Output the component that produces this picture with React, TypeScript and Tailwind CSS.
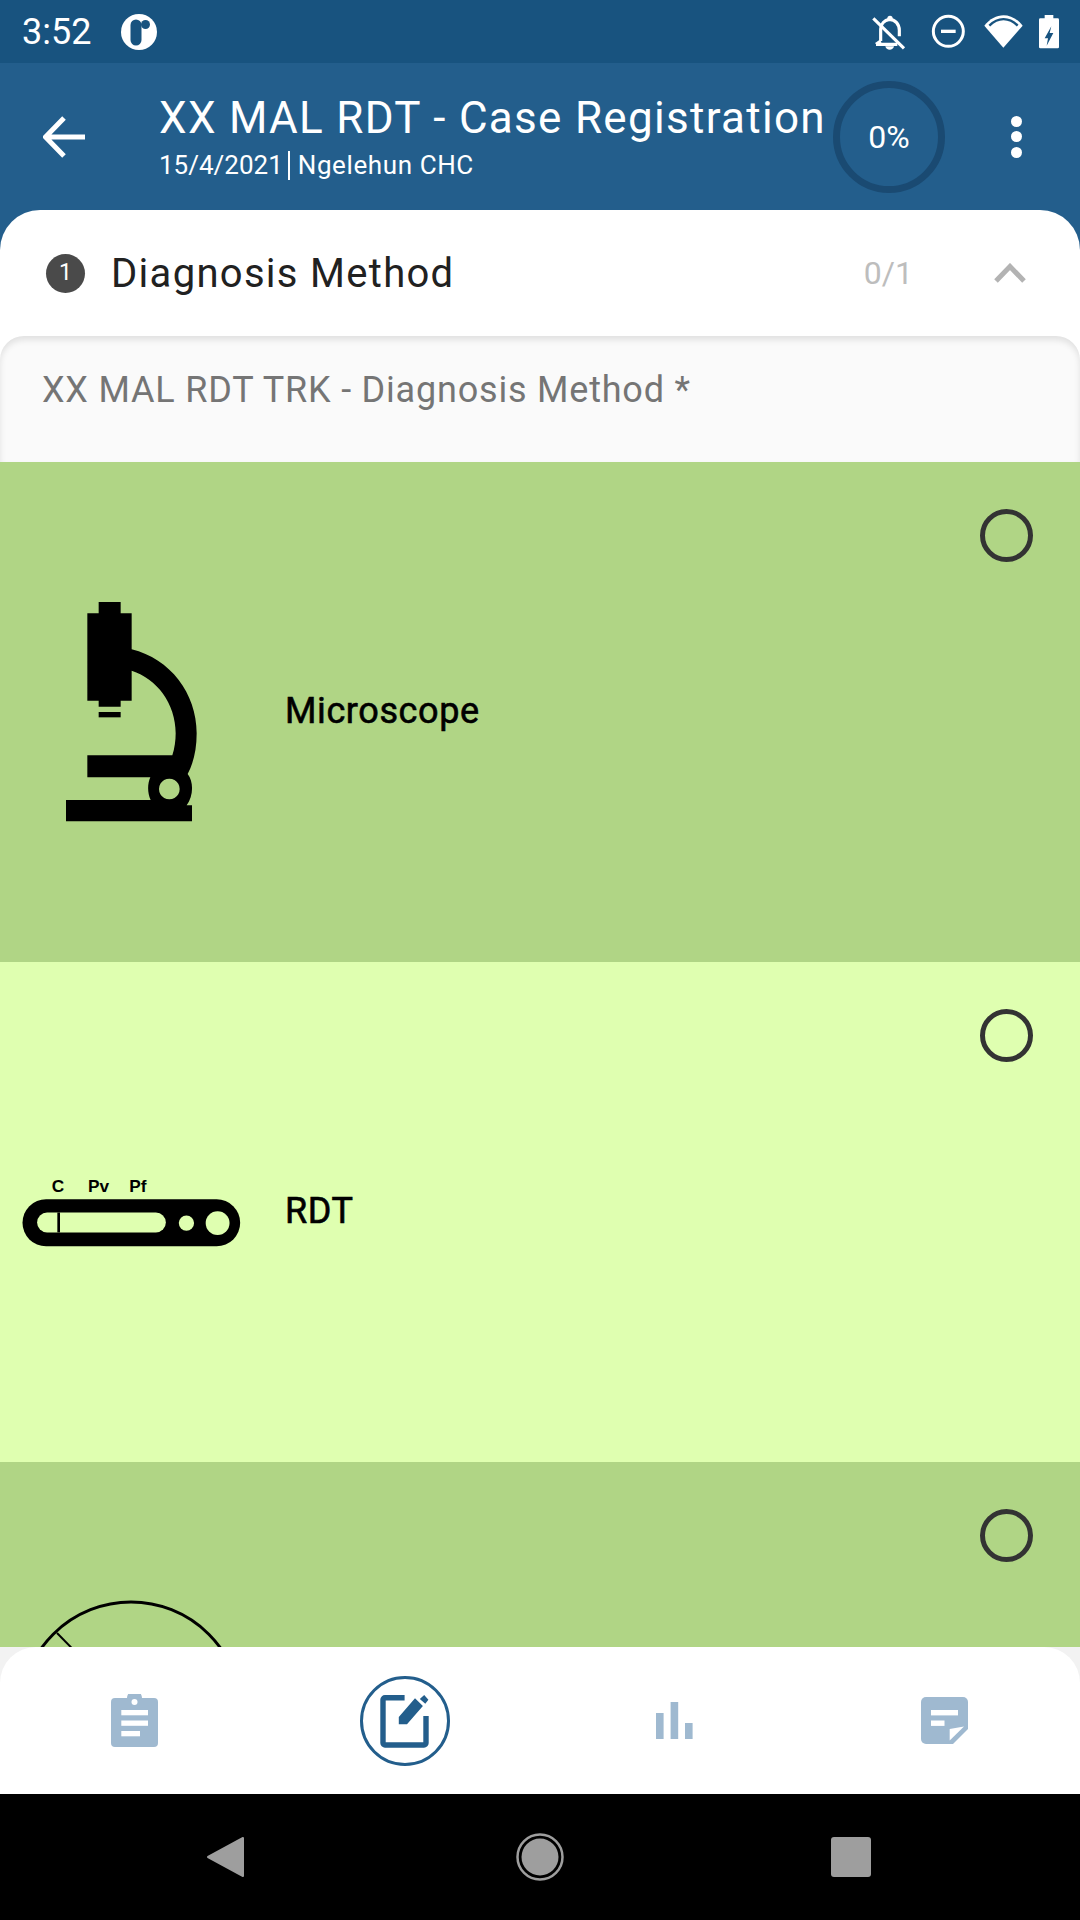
import type { ReactNode } from "react";

const font = { fontFamily: "Roboto, 'Liberation Sans', sans-serif" };

function StatusIcons() {
  return (
    <svg width="210" height="50" viewBox="0 0 630 150" fill="none">
      {/* bell off */}
      <path d="M62 102 V66 C62 50 74 40 88 37 C106 37 118 52 118 70 V88 M48 112 H112 M62 102 L48 112" stroke="#fff" strokeWidth="9.5" />
      <circle cx="90" cy="34" r="8" fill="#fff" />
      <path d="M76 118 H102 C100 132 78 132 76 118 Z" fill="#fff" />
      <path d="M40 34 L132 124" stroke="#fff" strokeWidth="9.5" />
      {/* do not disturb */}
      <circle cx="265" cy="73" r="45" stroke="#fff" strokeWidth="9" />
      <path d="M243 73 H287" stroke="#fff" strokeWidth="10" />
      {/* wifi */}
      <path d="M373 56 C405 14 456 14 488 56 L430 122 Z" fill="#fff" />
      <path d="M388 56 C414 30 447 30 473 56" stroke="#18537f" strokeWidth="7" />
      {/* battery */}
      <path d="M537 38 a4 4 0 0 1 4 -4 h13 v-10 h26 v10 h13 a4 4 0 0 1 4 4 v82 a4 4 0 0 1 -4 4 h-52 a4 4 0 0 1 -4 -4 Z" fill="#fff" />
      <path d="M574 58 L554 94 H564 L560 116 L580 78 H569 Z" fill="#18537f" />
    </svg>
  );
}

function AppLogo() {
  return (
    <svg width="36" height="36" viewBox="0 0 36 36">
      <circle cx="18" cy="18" r="18" fill="#fff" />
      <rect x="9.5" y="5.5" width="11" height="26" rx="5.5" fill="#18537f" />
      <circle cx="24.5" cy="10.5" r="4.5" fill="#18537f" />
    </svg>
  );
}

function Microscope() {
  return (
    <svg width="142" height="230" viewBox="63 51 426 690">
      <path
        fillRule="evenodd"
        d="M176 66 H242 V100 H275 V208 C390 236 470 340 470 460 C470 510 460 550 443 582 C462 606 460 650 440 676 H456 V724 H78 V660 H332 C322 640 322 612 331 592 H142 V526 H397 C404 505 407 482 407 460 C407 370 350 296 275 272 V362 H242 V380 H176 V362 H142 V100 H176 Z M388 596 a31 31 0 1 0 0.01 0 Z"
        fill="#000"
      />
      <rect x="176" y="396" width="66" height="16" fill="#000" />
    </svg>
  );
}

function RdtStrip() {
  return (
    <svg width="224" height="73" viewBox="60 76 672 220">
      <text x="173" y="125" textAnchor="middle" fontSize="52" fontWeight="700" fontFamily="'Liberation Sans', sans-serif">C</text>
      <text x="295" y="125" textAnchor="middle" fontSize="52" fontWeight="700" fontFamily="'Liberation Sans', sans-serif">Pv</text>
      <text x="414" y="125" textAnchor="middle" fontSize="52" fontWeight="700" fontFamily="'Liberation Sans', sans-serif">Pf</text>
      <rect x="66" y="146" width="656" height="142" rx="71" fill="#000" />
      <rect x="110" y="186" width="388" height="60" rx="30" fill="#dfffb0" />
      <rect x="171" y="186" width="8" height="60" fill="#000" />
      <circle cx="560" cy="218" r="23" fill="#dfffb0" />
      <circle cx="654" cy="218" r="36" fill="#dfffb0" />
    </svg>
  );
}

function ThirdIcon() {
  return (
    <svg width="230" height="230" viewBox="0 0 230 230" fill="none" stroke="#000" strokeWidth="3">
      <circle cx="114" cy="115" r="110" />
      <path d="M40 36 L89 86" strokeWidth="2" />
    </svg>
  );
}

function Option({ bg, icon, label }: { bg: string; icon: ReactNode; label?: string }) {
  return (
    <div className={`relative flex h-[500px] shrink-0 items-center ${bg}`}>
      <div className="flex w-[264px] shrink-0 justify-center">{icon}</div>
      {label && <span className="ml-[21px] -mt-[2px] text-[36px] tracking-[0.6px] text-black [-webkit-text-stroke:0.6px_#000]">{label}</span>}
      <span className="absolute right-[47px] top-[47px] size-[53px] rounded-full border-[5px] border-[#333333]" />
    </div>
  );
}

function ClipboardIcon() {
  return (
    <svg className="-ml-px" width="47" height="53" viewBox="0 0 47 53">
      <path d="M4 4 H16 a7.5 7.5 0 0 1 15 0 H43 a4 4 0 0 1 4 4 V49 a4 4 0 0 1 -4 4 H4 a4 4 0 0 1 -4 -4 V8 a4 4 0 0 1 4 -4 Z" fill="#9fb9d0" />
      <circle cx="23.5" cy="8" r="3" fill="#fff" />
      <rect x="10.3" y="16" width="26.7" height="5.3" fill="#fff" />
      <rect x="10.3" y="26.5" width="26.7" height="5.3" fill="#fff" />
      <rect x="10.3" y="37" width="18.7" height="5.3" fill="#fff" />
    </svg>
  );
}

function EditIcon() {
  return (
    <svg width="90" height="90" viewBox="0 0 90 90" fill="none">
      <circle cx="45" cy="45" r="43.5" stroke="#235e8c" strokeWidth="3" />
      <path d="M44.6 21.7 H25 a2 2 0 0 0 -2 2 V67 a2 2 0 0 0 2 2 H64 a2 2 0 0 0 2 -2 V40" stroke="#235e8c" strokeWidth="5.4" />
      <path d="M38.8 41 V48.3 H47 L62.9 30 L55 22.3 Z M64.2 19 L68.4 23.7 L65.3 27.7 L59.8 23 Z" fill="#235e8c" />
    </svg>
  );
}

function ChartIcon() {
  return (
    <svg className="-ml-px" width="37" height="37" viewBox="0 0 37 37" fill="#9fb9d0">
      <rect x="0" y="11" width="7.6" height="26" />
      <rect x="14.6" y="0" width="7.6" height="37" />
      <rect x="29" y="21" width="7.6" height="16" />
    </svg>
  );
}

function NoteIcon() {
  return (
    <svg className="-ml-px" width="47" height="47" viewBox="0 0 47 47">
      <path d="M5 0 H42 a5 5 0 0 1 5 5 V32 L32 47 H5 a5 5 0 0 1 -5 -5 V5 a5 5 0 0 1 5 -5 Z" fill="#9fb9d0" />
      <rect x="10" y="13" width="27" height="5.4" fill="#fff" />
      <rect x="10" y="23.5" width="13.5" height="5.4" fill="#fff" />
      <path d="M28.7 32 L43 29.5 L28.7 43.5 Z" fill="#fff" />
    </svg>
  );
}

export default function App() {
  return (
    <div className="flex h-screen w-full flex-col overflow-hidden bg-[#235e8c]" style={font}>
      {/* status bar */}
      <div className="flex h-[63px] shrink-0 items-center bg-[#18537f] pl-[22px] pr-[10px] text-white">
        <span className="w-[68px] text-[36px] leading-none">3:52</span>
        <span className="ml-[31px]">
          <AppLogo />
        </span>
        <span className="ml-auto">
          <StatusIcons />
        </span>
      </div>

      {/* toolbar */}
      <div className="flex h-[147px] shrink-0 items-center text-white">
        <div className="flex w-[159px] shrink-0 pl-[43px]">
          <svg width="42" height="42" viewBox="0 0 42 42" fill="none" stroke="#fff" strokeWidth="5">
            <path d="M42 21 H3 M21 2 L2.5 21 L21 40" />
          </svg>
        </div>
        <div className="w-[674px] shrink-0 self-start pt-[29px]">
          <div className="whitespace-nowrap text-[44px] leading-[52px] tracking-[1.3px]">XX MAL RDT - Case Registration</div>
          <div className="mt-[6px] flex items-center text-[26px] leading-[30px]">
            <span>15/4/2021</span>
            <span className="ml-[5px] mr-[8px] h-[29px] w-[2px] bg-white" />
            <span className="tracking-[0.6px]">Ngelehun CHC</span>
          </div>
        </div>
        <div className="flex size-[112px] shrink-0 items-center justify-center rounded-full border-[7px] border-[#1a4a72] text-[32px]">
          0%
        </div>
        <div className="flex flex-1 flex-col items-center gap-[4.5px] pl-[8px] pr-[1px]">
          <span className="size-[11px] rounded-full bg-white" />
          <span className="size-[11px] rounded-full bg-white" />
          <span className="size-[11px] rounded-full bg-white" />
        </div>
      </div>

      {/* form */}
      <div className="flex min-h-0 flex-1 flex-col overflow-hidden rounded-t-[40px] bg-white">
        <div className="flex h-[126px] shrink-0 items-center">
          <span className="ml-[46px] flex size-[39px] items-center justify-center rounded-full bg-[#4a4a4a] text-[23px] text-white">1</span>
          <span className="ml-[26px] mt-[2px] text-[40px] tracking-[1.3px] text-[#212121]">Diagnosis Method</span>
          <span className="ml-auto text-[32px] text-[#bdbdbd]">0/1</span>
          <svg className="ml-[81px] mr-[54px]" width="32" height="20" viewBox="0 0 32 20" fill="none" stroke="#b3b3b3" strokeWidth="5">
            <path d="M2 18 L16 3.5 L30 18" />
          </svg>
        </div>
        <div className="flex h-[126px] shrink-0 items-center rounded-t-[24px] bg-[#fafafa] pb-[18px] pl-[42px] text-[36px] tracking-[0.8px] text-[#757575] shadow-[inset_0_4px_6px_rgba(0,0,0,0.1)]">
          XX MAL RDT TRK - Diagnosis Method *
        </div>
        <Option bg="bg-[#b0d585]" icon={<Microscope />} label="Microscope" />
        <Option bg="bg-[#dfffb0]" icon={<RdtStrip />} label="RDT" />
        <Option bg="bg-[#b0d585]" icon={<ThirdIcon />} />
      </div>

      {/* bottom tabs */}
      <div className="shrink-0 bg-[#f2f2f2]">
        <div className="grid h-[147px] grid-cols-4 place-items-center rounded-t-[36px] bg-white">
          <ClipboardIcon />
          <EditIcon />
          <ChartIcon />
          <NoteIcon />
        </div>
      </div>

      {/* android nav */}
      <div className="flex h-[126px] shrink-0 items-center bg-black pl-[206px]">
        <svg width="38" height="42" viewBox="0 0 38 42">
          <path d="M37 2 V40 L2 21 Z" fill="#9e9e9e" stroke="#9e9e9e" strokeWidth="2" strokeLinejoin="round" />
        </svg>
        <svg className="ml-[272px]" width="48" height="48" viewBox="0 0 48 48">
          <circle cx="24" cy="24" r="22.5" fill="none" stroke="#9e9e9e" strokeWidth="2.5" />
          <circle cx="24" cy="24" r="18.5" fill="#9e9e9e" />
        </svg>
        <span className="ml-[267px] size-[40px] rounded-[3px] bg-[#9e9e9e]" />
      </div>
    </div>
  );
}
